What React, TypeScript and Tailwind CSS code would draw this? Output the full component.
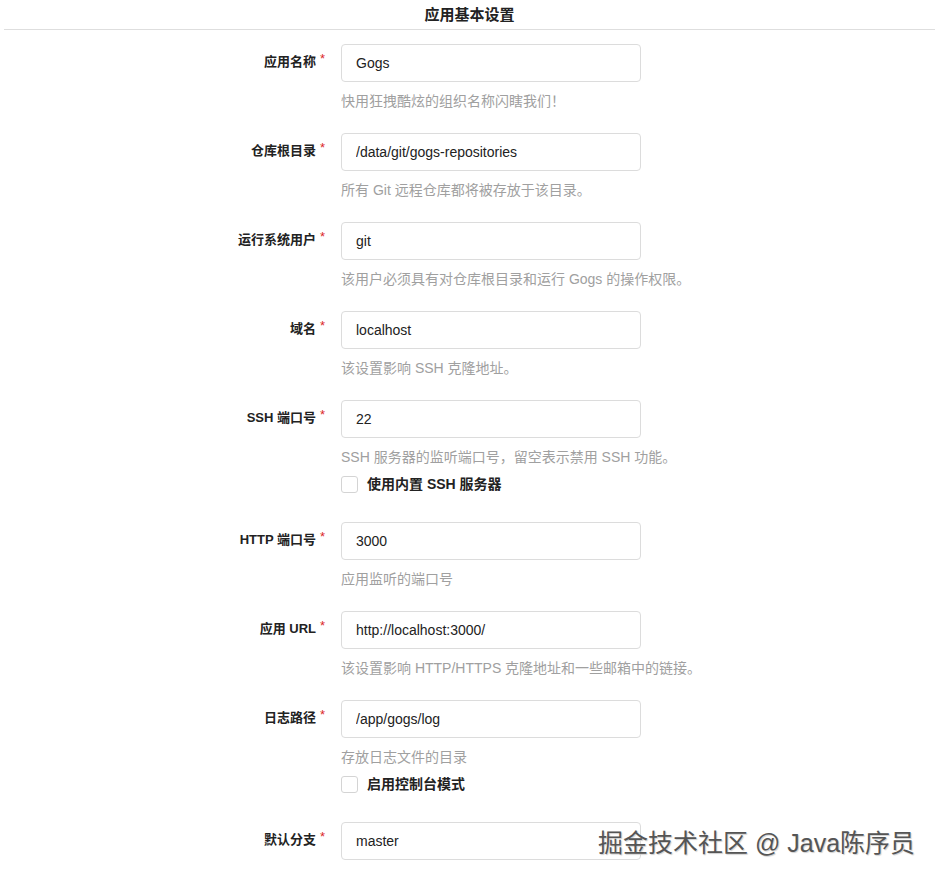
import React from 'react';

type Field = {
  label: string;
  value: string;
  help: string;
  checkbox?: string;
};

const fields: Field[] = [
  { label: '应用名称', value: 'Gogs', help: '快用狂拽酷炫的组织名称闪瞎我们！' },
  { label: '仓库根目录', value: '/data/git/gogs-repositories', help: '所有 Git 远程仓库都将被存放于该目录。' },
  { label: '运行系统用户', value: 'git', help: '该用户必须具有对仓库根目录和运行 Gogs 的操作权限。' },
  { label: '域名', value: 'localhost', help: '该设置影响 SSH 克隆地址。' },
  {
    label: 'SSH 端口号',
    value: '22',
    help: 'SSH 服务器的监听端口号，留空表示禁用 SSH 功能。',
    checkbox: '使用内置 SSH 服务器',
  },
  { label: 'HTTP 端口号', value: '3000', help: '应用监听的端口号' },
  { label: '应用 URL', value: 'http://localhost:3000/', help: '该设置影响 HTTP/HTTPS 克隆地址和一些邮箱中的链接。' },
  { label: '日志路径', value: '/app/gogs/log', help: '存放日志文件的目录', checkbox: '启用控制台模式' },
  { label: '默认分支', value: 'master', help: '' },
];

const font = "font-['Liberation_Sans','Noto_Sans_CJK_SC',sans-serif]";

export default function App() {
  return (
    <div className={`relative h-[882px] overflow-hidden bg-white text-[#333] ${font}`}>
      {/* Section header */}
      <div className="mx-[4px] border-b border-[#dedede] pt-[6px] pb-[5px] text-center">
        <h3 className="text-[15px] leading-[18px] font-bold text-[#222]">应用基本设置</h3>
      </div>

      <div className="mt-[14px] flex flex-col">
        {fields.map(f => (
          <div
            key={f.label}
            className={`grid grid-cols-[316px_1fr] gap-x-[25px] ${f.checkbox ? 'mb-[29px]' : 'mb-[23px]'}`}
          >
            <div className="flex justify-end pt-[8px]">
              <label className="relative text-[13px] leading-[20px] font-bold text-[#222]">
                {f.label}
                <span className="absolute -right-[9px] -top-[3px] text-[13px] font-normal text-[#db2828]">*</span>
              </label>
            </div>
            <div>
              <input
                readOnly
                value={f.value}
                className="h-[38px] w-[300px] rounded-[4px] border border-[#dcdcdc] bg-white px-[14px] text-[14px] text-[#222] outline-none"
              />
              {f.help && (
                <p className="mt-[10px] whitespace-nowrap text-[14px] leading-[18px] text-[#a0a0a0]">{f.help}</p>
              )}
              {f.checkbox && (
                <div className="mt-[9px] flex h-[18px] items-center gap-[9px]">
                  <span className="h-[17px] w-[17px] rounded-[3px] border border-[#d4d4d4] bg-white" />
                  <span className="text-[14px] font-bold text-[#222]">{f.checkbox}</span>
                </div>
              )}
            </div>
          </div>
        ))}
      </div>

      {/* Watermark */}
      <div className="absolute left-[598px] top-[827px] text-[25px] leading-[32px] text-[#555] [text-shadow:1px_1px_1px_#cfcfcf]">
        掘金技术社区 @ Java陈序员
      </div>
    </div>
  );
}
